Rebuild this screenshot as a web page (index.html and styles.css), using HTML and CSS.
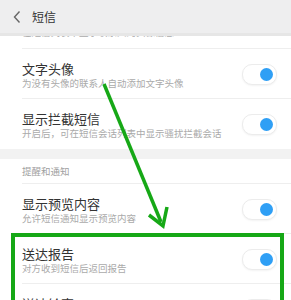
FILE: index.html
```html
<!DOCTYPE html>
<html lang="zh-CN">
<head>
    <meta charset="UTF-8">
    <meta name="viewport" content="width=device-width, initial-scale=1.0">
    <title>短信设置</title>
    <link rel="stylesheet" href="styles.css">
</head>
<body>

    <div class="top-bar">
        <svg class="back" width="10" height="14" viewBox="0 0 10 14">
            <path d="M7.5 1.5 L2.5 7 L7.5 12.5" fill="none" stroke="#666" stroke-width="1.4"/>
        </svg>
        <span class="top-title">短信</span>
    </div>

    <div class="settings">
        <div class="group">
            <!-- partly scrolled under the top bar -->
            <div class="row first">
                <div class="row-body">
                    <div class="texts">
                        <div class="sub">在短信列表中显示联系人的头像信息</div>
                    </div>
                </div>
            </div>
            <div class="row">
                <div class="row-body">
                    <div class="texts">
                        <div class="title">文字头像</div>
                        <div class="sub">为没有头像的联系人自动添加文字头像</div>
                    </div>
                    <span class="switch"><span class="knob"></span></span>
                </div>
            </div>
            <div class="row">
                <div class="row-body last">
                    <div class="texts">
                        <div class="title">显示拦截短信</div>
                        <div class="sub">开启后，可在短信会话列表中显示骚扰拦截会话</div>
                    </div>
                    <span class="switch"><span class="knob"></span></span>
                </div>
            </div>
        </div>

        <div class="group">
            <div class="row head">
                <div class="row-body">
                    <span class="group-name">提醒和通知</span>
                </div>
            </div>
            <div class="row">
                <div class="row-body">
                    <div class="texts">
                        <div class="title">显示预览内容</div>
                        <div class="sub">允许短信通知显示预览内容</div>
                    </div>
                    <span class="switch"><span class="knob"></span></span>
                </div>
            </div>
            <div class="row">
                <div class="row-body">
                    <div class="texts">
                        <div class="title">送达报告</div>
                        <div class="sub">对方收到短信后返回报告</div>
                    </div>
                    <span class="switch"><span class="knob"></span></span>
                </div>
            </div>
            <div class="row">
                <div class="row-body">
                    <div class="texts">
                        <div class="title">送达铃声</div>
                        <div class="sub">短信送达时播放提示音</div>
                    </div>
                    <span class="switch"><span class="knob"></span></span>
                </div>
            </div>
        </div>
    </div>

    <!-- annotation drawn over the screenshot -->
    <div class="mark-box"></div>
    <svg class="mark-arrow" width="291" height="300" viewBox="0 0 291 300">
        <line x1="104" y1="84" x2="161" y2="222" stroke="#16a816" stroke-width="3.5"/>
        <polyline points="149,215 163,226 167,207" fill="none" stroke="#16a816" stroke-width="3.5" stroke-linejoin="miter"/>
    </svg>

</body>
</html>
```

FILE: styles.css
```css
body {
    margin: 0;
    padding: 0;
    font-family: "Noto Sans CJK SC", "Noto Sans", sans-serif;
    background: #f2f2f2;
    overflow: hidden;
    position: relative;
    height: 300px;
}

.top-bar {
    position: absolute;
    top: 0;
    left: 0;
    right: 0;
    height: 33px;
    background: #eeeeef;
    border-bottom: 3px solid #e6e6e6;
    display: flex;
    align-items: center;
    z-index: 2;
}

.back {
    margin-left: 12px;
    margin-right: 10px;
}

.top-title {
    font-size: 12px;
    color: #333;
}

.settings {
    padding-top: 36px;
}

.group {
    background: #fff;
    margin-bottom: 10px;
}

.row {
    padding-left: 22px;
    height: 50px;
}

.row.first {
    height: 13px;
    overflow: hidden;
}

.row.first .row-body {
    height: 12px;
}

.row.first .texts {
    padding-top: 0;
    margin-top: -11px;
}

.row-body {
    height: 49px;
    display: flex;
    align-items: flex-start;
    justify-content: space-between;
    border-bottom: 1px solid #eeeeee;
    padding-right: 14px;
}

.row-body.last {
    border-bottom: none;
    height: 48px;
}

.row.head {
    height: 25px;
}

.row.head .row-body {
    height: 24px;
    align-items: center;
}

.group-name {
    font-size: 9.5px;
    color: #a0a0a0;
}

.texts {
    padding-top: 12px;
}

.title {
    font-size: 13px;
    line-height: 15px;
    color: #333;
}

.sub {
    font-size: 9.5px;
    line-height: 12px;
    margin-top: 1px;
    color: #aaa;
}

.switch {
    margin-top: 15px;
    width: 30px;
    height: 19px;
    border-radius: 10px;
    border: 1px solid #ececec;
    background: #fff;
    box-shadow: 0 1px 2px rgba(0, 0, 0, 0.05);
    display: flex;
    align-items: center;
    justify-content: flex-end;
    padding-right: 3px;
    box-sizing: content-box;
}

.knob {
    width: 13px;
    height: 13px;
    border-radius: 50%;
    background: #2f9ff5;
}

.mark-box {
    position: absolute;
    left: 11px;
    top: 233px;
    width: 265px;
    height: 90px;
    border: 4px solid #16a816;
    z-index: 3;
}

.mark-arrow {
    position: absolute;
    left: 0;
    top: 0;
    z-index: 3;
}
```
